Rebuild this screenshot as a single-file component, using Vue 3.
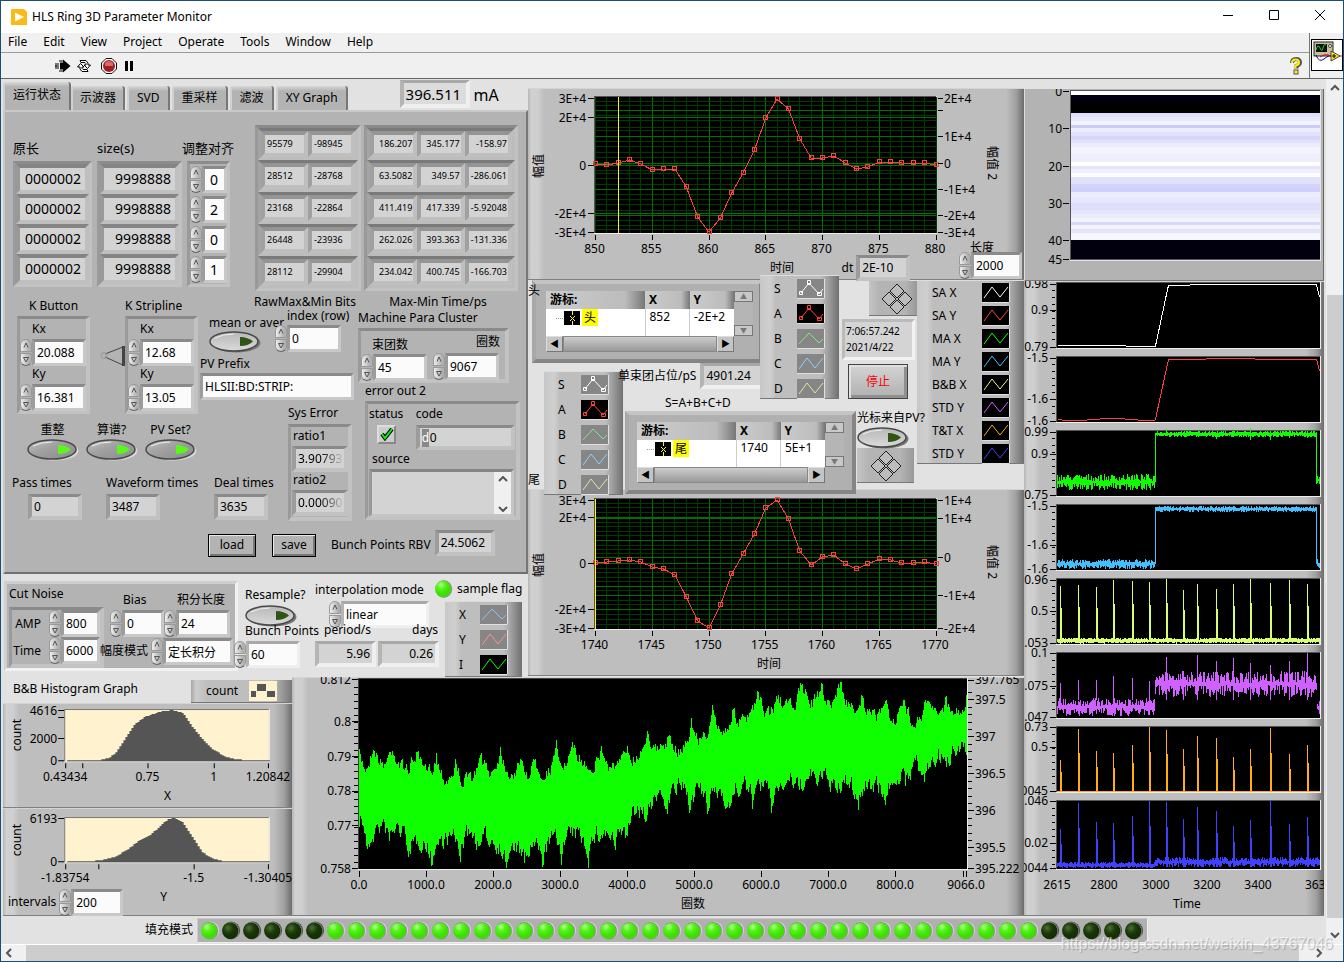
<script setup>
import { h } from 'vue'

const Spin = () =>
  h('span', { class: 'spin' }, [
    h('button', { class: 'up', type: 'button', 'aria-label': 'Increment' }, [
      h('svg', { viewBox: '0 0 10 11' }, [h('path', { d: 'M3 7.500 5 3 7 7.500', fill: 'none', stroke: '#555' })])
    ]),
    h('button', { class: 'down', type: 'button', 'aria-label': 'Decrement' }, [
      h('svg', { viewBox: '0 0 10 11' }, [h('path', { d: 'M2.5 3.500H7.500L5 8Z', fill: 'none', stroke: '#555' })])
    ])
  ])
const Num = (p) =>
  h('div', { class: 'num' }, [h(Spin), h('input', { type: 'text', value: p.value, 'aria-label': p.label })])
Num.props = ['value', 'label']

const Toggle = (p) =>
  h('button', { class: 'toggle', type: 'button', 'aria-label': p.label, 'aria-pressed': String(p.on) }, [
    h('svg', { viewBox: '0 0 52 22', width: 52, height: 22 }, [
      h('ellipse', { cx: 27.5, cy: 12, rx: 24, ry: 9.5, fill: p.on ? '#d8d8d8' : '#777' }),
      h('ellipse', { cx: 25, cy: 10.5, rx: 24, ry: 9.5, fill: p.on ? 'url(#ovalOn)' : 'url(#ovalOff)', stroke: '#4a4a4a', 'stroke-width': 1.5 }),
      h('path', { d: 'M6 7Q14 3 25 3', fill: 'none', stroke: '#eee' }),
      h('path', { d: 'M31 6Q39 6 44 10.500Q39 15 31 15Z', fill: p.on ? '#5cf51c' : '#2f5414' })
    ])
  ])
Toggle.props = { on: Boolean, label: String }

const Wave = (p) =>
  h('svg', { class: 'wave', viewBox: '0 0 28 20', width: 28, height: 20 }, [
    h('rect', { width: 28, height: 20, fill: p.dark ? '#000' : '#868686' }),
    h('path', { d: 'M0 19.500H27.500V0', fill: 'none', stroke: '#e0e0e0' }),
    h('path', {
      d: p.kind === 'a' ? 'M2 15 12 4 22 14 26 10' : p.kind === 'm' ? 'M4 14 12 4 22 15 26 10' : 'M2 15 10 4 18 14 26 4',
      fill: 'none', stroke: p.color
    }),
    p.kind === 'm' ? h('path', { d: 'M2.5 12.500h3v3h-3ZM10.500 1.500h3v4h-3ZM20.500 13.500h4v3h-4Z', fill: 'none', stroke: p.color }) : null
  ])
Wave.props = { color: String, kind: String, dark: Boolean }

const Pad = () =>
  h('svg', { class: 'pad', viewBox: '0 0 32 32', width: 32, height: 32 }, [
    h('path', {
      d: 'M16 1 23 8 16 15 9 8ZM16 17 23 24 16 31 9 24ZM8 9 15 16 8 23 1 16ZM24 9 31 16 24 23 17 16Z',
      fill: '#bcbcbc', stroke: '#222'
    })
  ])

const menus = ['File', 'Edit', 'View', 'Project', 'Operate', 'Tools', 'Window', 'Help']
const tabs = ['运行状态', '示波器', 'SVD', '重采样', '滤波', 'XY Graph']
const adjust = [0, 2, 0, 1]
const rawBits = [['95579', '-98945'], ['28512', '-28768'], ['23168', '-22864'], ['26448', '-23936'], ['28112', '-29904']]
const times = [
  ['186.207', '345.177', '-158.97'],
  ['63.5082', '349.57', '-286.061'],
  ['411.419', '417.339', '-5.92048'],
  ['262.026', '393.363', '-131.336'],
  ['234.042', '400.745', '-166.703']
]
const plots = [
  { n: 'S', c: '#fff', k: 'm' },
  { n: 'A', c: '#ff4040', k: 'm', d: true },
  { n: 'B', c: '#80e880', k: 'a' },
  { n: 'C', c: '#90d0ff', k: 'z' },
  { n: 'D', c: '#e0e8a0', k: 'z' }
]
const strips = [
  { n: 'SA X', c: '#ffffff' },
  { n: 'SA Y', c: '#ff4040' },
  { n: 'MA X', c: '#10ff00' },
  { n: 'MA Y', c: '#40c0ff' },
  { n: 'B&B X', c: '#d8ff70' },
  { n: 'STD Y', c: '#d060ff' },
  { n: 'T&T X', c: '#ffb010' },
  { n: 'STD Y', c: '#4040ff' }
]
const cursors = [
  { id: 'head', name: '头', x: '852', y: '-2E+2' },
  { id: 'tail', name: '尾', x: '1740', y: '5E+1' }
]
const leds = Array.from({ length: 45 }, (_, i) => i === 0 || (i > 5 && i < 40))

let seed = 7
const rnd = () => {
  seed = (seed * 16807) % 2147483647
  return seed / 2147483647
}
const r1 = (v) => Math.round(v * 10) / 10
const path = (pts) => 'M' + pts.map((p) => r1(p[0]) + ' ' + r1(p[1])).join('L')

const xs = Array.from({ length: 31 }, (_, i) => 595.5 + i * 11.35)
const headY = [164, 165, 163, 160, 164, 170, 169, 169, 187, 217, 232, 218, 193, 173, 150, 118, 99, 109, 139, 158, 158, 156, 163, 169, 167, 162, 162, 163, 163, 163, 165]
const tailY = [563, 562, 561, 560, 562, 567, 569, 575, 597, 621, 628, 605, 574, 554, 534, 508, 500, 519, 551, 565, 557, 555, 564, 569, 564, 559, 560, 563, 563, 562, 564]
const graphs = [
  {
    id: 'h', box: '528 88 496 191', top: 97, bottom: 233, ys: headY, x0: 850, tick: 5, xt: 253, unit: 272,
    left: [['3E+4', 98.5], ['2E+4', 117.5], ['0', 165.5], ['-2E+4', 213.5], ['-3E+4', 232.5]],
    right: [['2E+4', 98.5], ['', 110.5], ['1E+4', 136.5], ['0', 163.5], ['-1E+4', 189.5], ['-2E+4', 215.5], ['-3E+4', 232.5]],
    major: [110, 117, 136, 163, 165, 189, 213, 215],
    minor: [101, 105, 115, 120, 127, 130, 141, 146, 152, 157, 170, 173, 178, 184, 194, 199, 204, 210, 220, 225, 229], cursor: 618
  },
  {
    id: 't', box: '528 489 496 187', top: 499, bottom: 629, ys: tailY, x0: 1740, tick: 5, xt: 649, unit: 668,
    left: [['3E+4', 500.5], ['2E+4', 517.5], ['0', 563.5], ['-2E+4', 609.5], ['-3E+4', 628.5]],
    right: [['1E+4', 500.5], ['1E+4', 518.5], ['0', 557.5], ['-1E+4', 595.5], ['-2E+4', 628.5]],
    major: [517, 518, 540, 557, 563, 586, 595, 609],
    minor: [503, 507, 512, 522, 526, 531, 535, 545, 549, 553, 568, 572, 577, 581, 590, 600, 604, 614, 619, 624], cursor: 595
  }
]

const interp = (t, x) => {
  for (let i = 1; i < t.length; i++) {
    if (x <= t[i][0]) {
      const a = t[i - 1]
      const b = t[i]
      return a[1] + ((b[1] - a[1]) * (x - a[0])) / (b[0] - a[0])
    }
  }
  return t[t.length - 1][1]
}
const hist1 = [[65, 760.5], [97, 760], [107, 758], [115, 752], [125, 737], [133, 725], [143, 717], [160, 711.5], [171, 710], [182, 713], [192, 728], [200, 738], [210, 748], [223, 756], [233, 759], [247, 760], [268, 760.5]]
const hist2 = [[65, 861.5], [87, 861], [100, 860], [113, 857], [127, 849], [140, 839], [150, 834], [160, 825], [167, 819], [173, 818], [182, 823], [193, 840], [200, 851], [210, 858], [223, 861], [268, 861.5]]
const steps = (t, base) => {
  let d = 'M65 ' + base
  for (let x = 65; x < 268; x += 2) d += 'V' + Math.round(interp(t, x)) + 'H' + (x + 2)
  return d + 'V' + base + 'Z'
}
const histPaths = [steps(hist1, 761), steps(hist2, 862)]

const uPeaks = [[359, 755], [373, 743], [392, 744], [416, 750], [436, 754], [455, 763], [481, 755], [500, 748], [521, 757], [535, 756], [556, 748], [574, 742], [601, 747], [627, 745], [647, 727], [667, 735], [691, 723], [712, 713], [733, 708], [757, 693], [778, 692], [802, 680], [821, 685], [840, 679], [861, 695], [884, 698], [903, 700], [927, 696], [946, 695], [967, 691]]
const lDips = [[359, 820], [367, 855], [389, 842], [410, 857], [431, 863], [460, 855], [479, 852], [506, 868], [524, 867], [542, 864], [561, 854], [588, 856], [615, 852], [625, 840], [646, 823], [667, 808], [689, 807], [707, 812], [729, 810], [752, 803], [771, 807], [799, 797], [837, 800], [858, 805], [885, 803], [905, 788], [924, 783], [946, 772], [967, 757]]
const dist = (t, x) => Math.min(1, Math.min(...t.map((p) => Math.abs(p[0] - x))) / 8)
const turns = (() => {
  const top = []
  const bot = []
  let du = 0
  let dl = 0
  for (let x = 359; x < 967; x++) {
    du = du * 0.5 + (rnd() - 0.5) * 12
    dl = dl * 0.5 + (rnd() - 0.5) * 16
    const u = interp(uPeaks, x) + 20 * Math.pow(dist(uPeaks, x), 0.6) + du
    const l = interp(lDips, x) - 20 * Math.pow(dist(lDips, x), 0.5) + dl
    top.push('V' + Math.max(679, Math.round(u)) + 'H' + (x + 1))
    bot.unshift('V' + Math.min(868, Math.round(l)) + 'H' + x)
  }
  return 'M359 800' + top.join('') + bot.join('') + 'Z'
})()

const spikes = [1060, 1078, 1096, 1113, 1132, 1149, 1166, 1183, 1197, 1216, 1233, 1250, 1270, 1289, 1307]
const trace = (fn) => {
  const pts = []
  for (let x = 1057; x < 1320; x++) pts.push([x + 0.5, fn(x)])
  return path(pts)
}
const noise = (fn) => {
  let d = ''
  for (let x = 1057; x < 1320; x++) {
    const [c, a] = fn(x)
    d += 'M' + (x + 0.5) + ' ' + r1(c - 1 - rnd() * a) + 'V' + r1(c + 1 + rnd() * a)
  }
  return d
}
const comb = (tops, base) => spikes.map((x, i) => `M${x + 0.5} ${base}V${tops[i]}M${x + 1.5} ${base}V${Math.round((base + tops[i] * 1.6) / 2.6)}`).join('')
const up = (x) => x >= 1155 && x < 1317
const tops5 = [586, 585, 587, 580, 581, 582, 579, 590, 584, 589, 584, 579, 583, 580, 584]
const tops6 = [683, 680, 680, 676, 678, 681, 657, 671, 655, 661, 658, 663, 665, 661, 653]
const tops7 = [760, 729, 751, 753, 745, 727, 730, 749, 736, 738, 757, 749, 728, 754, 745]
const tops8 = [829, 803, 822, 823, 816, 801, 802, 819, 807, 811, 826, 820, 801, 824, 817]
const bands = [
  { y: 283, h: 65, d: trace((x) => (x < 1155 ? 345 + (x > 1125 ? 1.5 : 0) : x < 1168 ? 346 - (x - 1155) * 4.7 : x < 1317 ? (x < 1190 ? 285.5 : 284.5) : 285 + (x - 1316) * 4)), t: [['0.98', 284], ['0.9', 310], ['0.79', 347]] },
  { y: 357, h: 65, d: trace((x) => (x < 1155 ? 419.5 + Math.round(Math.sin(x / 12)) : x < 1168 ? 419 - (x - 1155) * 4.6 : x < 1317 ? 359.5 - (x > 1205 && x < 1255 ? 1 : 0) : 359 + (x - 1316) * 4)), t: [['-1.5', 358], ['-1.6', 399], ['-1.6', 421]] },
  { y: 431, h: 65, d: noise((x) => (up(x) ? [434, spikes.includes(x) ? 6 : 2] : x < 1155 ? [482, 7] : [480, 3])) + 'M1155.5 433V482M1316.5 433V484', t: [['0.99', 432], ['0.9', 454], ['0.75', 495]] },
  { y: 505, h: 65, d: noise((x) => (up(x) ? [509, 2] : [564, 4])) + 'M1155.5 508V564M1316.5 508V564', t: [['-1.5', 506], ['-1.6', 545], ['-1.6', 569]] },
  { y: 579, h: 65, d: noise(() => [640.5, 2]) + comb(tops5, 642), t: [['0.96', 580], ['0.5', 611], ['.053', 643]] },
  { y: 653, h: 65, d: noise((x) => (up(x) ? [684, 12] : [707, 8])) + spikes.map((x, i) => `M${x + 0.5} 700V${tops6[i]}`).join(''), t: [['0.1', 653], ['.075', 686], ['.047', 717]] },
  { y: 727, h: 65, d: 'M1057 791.5H1320' + comb(tops7, 792), t: [['0.73', 727], ['0.5', 747], ['0045', 791]] },
  { y: 801, h: 68, d: noise((x) => (x < 1155 ? [865, 2] : [862, 4])) + comb(tops8, 867), t: [['.046', 801], ['0.02', 843], ['0044', 868]] }
]
const shades = [
  [91, 4, '#fff'], [95, 7, '#00000f'], [102, 11, '#000'], [113, 4, '#dfdffd'], [117, 4, '#e8e7fe'], [121, 4, '#f3f3fe'], [125, 3, '#cbcbfa'], [128, 4, '#ededfd'], [132, 4, '#e2e2fd'],
  [136, 4, '#d7d7fb'], [140, 3, '#e1e1fb'], [143, 4, '#ebebfd'], [147, 7, '#f3f3fe'], [154, 8, '#eeeefd'], [162, 4, '#fff'], [166, 3, '#e4e4fc'], [169, 4, '#f0f0fe'], [173, 4, '#fcfcff'],
  [177, 7, '#e1e1fb'], [184, 4, '#d4d4fb'], [188, 4, '#cfcffb'], [192, 5, '#ececfc'], [197, 6, '#e8e8fc'], [203, 7, '#dfdffb'], [210, 4, '#e4e4fb'], [214, 4, '#ebebfc'], [218, 4, '#f3f3fe'],
  [222, 3, '#d8d8fb'], [225, 4, '#f2f2fe'], [229, 4, '#e3e3fc'], [233, 7, '#f6f6ff'], [240, 19, '#00000f']
]
const range = (a, b, s) => {
  const o = []
  for (let v = a; v <= b; v += s) o.push(r1(v))
  return o
}
</script>

<template>
  <div class="window">
    <svg class="defs" width="0" height="0" aria-hidden="true">
      <defs>
        <linearGradient id="ovalOn" x1="0" y1="0" x2="1" y2="1">
          <stop offset="0" stop-color="#c4c4c4" /><stop offset=".4" stop-color="#a2a2a2" /><stop offset="1" stop-color="#8a8a8a" />
        </linearGradient>
        <linearGradient id="ovalOff" x1="0" y1="0" x2="0" y2="1">
          <stop offset="0" stop-color="#b8b8b8" /><stop offset="1" stop-color="#dadada" />
        </linearGradient>
      </defs>
    </svg>
    <header class="title">
      <svg width="16" height="16" viewBox="0 0 16 16"><path d="M1 0H13L16 3V16H0V1Z" fill="#fdb913" /><path d="M4 3.500 13 8 4 12.500Z" fill="#fff" /></svg>
      <span>HLS Ring 3D Parameter Monitor</span>
      <div class="caption">
        <button aria-label="Minimize"><svg width="12" height="12"><path d="M1 6.500H11" stroke="#000" /></svg></button>
        <button aria-label="Maximize"><svg width="12" height="12"><path d="M1.500 1.500H10.500V10.500H1.500Z" fill="none" stroke="#000" /></svg></button>
        <button aria-label="Close"><svg width="12" height="12"><path d="M1 1 11 11M11 1 1 11" stroke="#000" /></svg></button>
      </div>
    </header>
    <div class="bars">
      <div class="barcol">
        <nav class="menu"><button v-for="m in menus" :key="m">{{ m }}</button></nav>
        <div class="tools">
          <button aria-label="Run"><svg width="16" height="14" viewBox="0 0 16 14"><path d="M1 4V10M3 4V10M0 7H2" stroke="#000" stroke-width="1" /><path d="M5 3.500H8V0.500L15.500 7 8 13.500V10.500H5Z" fill="#000" /><path d="M5 1V3M7 1V3M5 11V13M7 11V13" stroke="#000" /></svg></button>
          <button aria-label="Run continuously"><svg width="16" height="14" viewBox="0 0 16 14" fill="#fff" stroke="#000"><path d="M4 1.500H10L12 4V6H14.500L11.500 9.500 8 6H10V4.500L9 3.500H5Z" /><path d="M12 12.500H6L4 10V8H1.500L4.500 4.500 8 8H6V9.500L7 10.500H11Z" /></svg></button>
          <button aria-label="Abort"><svg width="16" height="16" viewBox="0 0 16 16"><path d="M5 .5H11L15.500 5V11L11 15.500H5L.5 11V5Z" fill="#fff" stroke="#111" /><circle cx="8" cy="8" r="6" fill="#a11f22" /><path d="M4 5Q8 1 12 5V8H4Z" fill="#d86a6a" /></svg></button>
          <button aria-label="Pause"><svg width="10" height="12"><path d="M1 1H4V11H1ZM6 1H9V11H6Z" fill="#000" /></svg></button>
          <button class="help" aria-label="Context help"><svg width="14" height="18" viewBox="0 0 14 18"><path d="M3 6Q3 2 7 2 11 2 11 5.500 11 8 7.500 9V11.500" fill="none" stroke="#555" stroke-width="4" /><path d="M3 6Q3 2.500 6.500 2.500 10 2.500 10 5.500 10 8 6.500 8.500V11" fill="none" stroke="#ffee10" stroke-width="2" /><rect x="5" y="13" width="4" height="4" fill="#ffee10" stroke="#555" /></svg></button>
        </div>
      </div>
      <div class="viicon">
        <svg width="32" height="32" viewBox="0 0 32 32"><rect x=".5" y=".5" width="31" height="31" fill="#fff" stroke="#000" /><rect x="3" y="3" width="19" height="14" fill="#c8bf98" stroke="#222" /><rect x="5" y="5" width="11" height="8" fill="#111" /><path d="M5 11Q7 4 9 9T12 9 15 6" fill="none" stroke="#20d040" /><circle cx="19" cy="7" r="1.500" fill="#fff" stroke="#444" /><path d="M5 16Q8 24 13 20T20 17" fill="none" stroke="#00a" /><path d="M9 18Q14 14 20 17M26 17H31" fill="none" stroke="#d00" /><path d="M20 12 29 17 20 22Z" fill="#ffe720" stroke="#444" /><path d="M21 17H25M23 15V19" stroke="#000" /></svg>
      </div>
    </div>

    <div class="body">
      <main class="front">
        <div class="board">
          <section class="tabarea">
            <div class="tabs">
              <button v-for="(t, i) in tabs" :key="t" :class="{ on: i === 0 }">{{ t }}</button>
              <output class="ind current">396.511</output><span class="ma">mA</span>
            </div>
            <div class="tabpage">
              <div class="arrays">
                <div class="arrcol len"><span>原长</span><div class="arr"><output v-for="i in 4" :key="i">0000002</output></div></div>
                <div class="arrcol size"><span>size(s)</span><div class="arr"><output v-for="i in 4" :key="i">9998888</output></div></div>
                <div class="arrcol adj"><span>调整对齐</span><div class="arr"><Num v-for="(v, i) in adjust" :key="i" :value="v" :label="'调整对齐 ' + (i + 1)" /></div></div>
                <div class="gridcol raw"><div class="cells"><div v-for="(r, i) in rawBits" :key="i" class="cellrow"><output v-for="v in r" :key="v">{{ v }}</output></div></div><span>RawMax&amp;Min Bits</span></div>
                <div class="gridcol tim"><div class="cells"><div v-for="(r, i) in times" :key="i" class="cellrow"><output v-for="v in r" :key="v">{{ v }}</output></div></div><span>Max-Min Time/ps</span></div>
              </div>
              <div class="lower">
                <div class="kset">
                  <div class="krow">
                    <div class="kfield mid"><span>K Button</span><div class="cluster"><span>Kx</span><Num value="20.088" label="Button Kx" /><span>Ky</span><Num value="16.381" label="Button Ky" /></div></div>
                    <svg width="26" height="22" viewBox="0 0 26 22" fill="none" stroke="#444"><path d="M5 9 23 2V20L5 12" /><circle cx="4" cy="10.500" r="3" stroke="#999" /><path d="M23.500 1V21" stroke-width="3" /></svg>
                    <div class="kfield"><span>K Stripline</span><div class="cluster"><span>Kx</span><Num value="12.68" label="Stripline Kx" /><span>Ky</span><Num value="13.05" label="Stripline Ky" /></div></div>
                  </div>
                  <div class="toggles">
                    <div><span>重整</span><Toggle on label="重整" /></div>
                    <div><span>算谱?</span><Toggle on label="算谱" /></div>
                    <div><span>PV Set?</span><Toggle on label="PV Set" /></div>
                  </div>
                </div>
                <div class="mean">
                  <div class="meanrow">
                    <div class="m1"><span>mean or aver</span><Toggle label="mean or aver" /></div>
                    <div class="m2"><span>index (row)</span><Num value="0" label="index (row)" /></div>
                  </div>
                  <label for="prefix">PV Prefix</label>
                  <input id="prefix" class="ctl" value="HLSII:BD:STRIP:" />
                </div>
                <div class="syserr">
                  <span>Sys Error</span>
                  <div class="cluster"><span>ratio1</span><output class="ind fade"><i>3.90793</i></output><span>ratio2</span><output class="ind fade"><i>0.00090</i></output></div>
                </div>
                <div class="times">
                  <div><span>Pass times</span><output class="ind">0</output></div>
                  <div><span>Waveform times</span><output class="ind">3487</output></div>
                  <div><span>Deal times</span><output class="ind">3635</output></div>
                </div>
                <div class="machine">
                  <span>Machine Para Cluster</span>
                  <div class="cluster para">
                    <div><span>束团数</span><Num value="45" label="束团数" /></div>
                    <div class="turn"><span>圈数</span><Num value="9067" label="圈数" /></div>
                  </div>
                  <span class="errcap">error out 2</span>
                  <div class="cluster err">
                    <div class="errtop">
                      <div><span>status</span><button class="check" aria-label="status"><svg width="14" height="14" viewBox="0 0 14 14"><path d="M2 7 5 11 12 2" fill="none" stroke="#000" stroke-width="4" /><path d="M2 7 5 11 12 2" fill="none" stroke="#10f010" stroke-width="2" /></svg></button></div>
                      <div class="code"><span>code</span><output class="ind"><i>d</i>0</output></div>
                    </div>
                    <label for="source">source</label>
                    <div class="source"><textarea id="source"></textarea><div class="minibar"><svg width="10" height="6"><path d="M1 5 5 1 9 5" fill="none" stroke="#555" stroke-width="2" /></svg><svg width="10" height="6"><path d="M1 1 5 5 9 1" fill="none" stroke="#555" stroke-width="2" /></svg></div></div>
                  </div>
                </div>
                <div class="actions">
                  <button>load</button><button class="save">save</button><span>Bunch Points RBV</span><output class="ind">24.5062</output>
                </div>
              </div>
            </div>
          </section>

          <section class="settings">
            <div class="cut">
              <div class="cutl"><span>Cut Noise</span><div class="cluster"><div class="line"><span>AMP</span><Num value="800" label="AMP" /></div><div class="line"><span>Time</span><Num value="6000" label="Time" /></div></div></div>
              <div class="cutr">
                <div class="r1"><div class="bias"><span>Bias</span><Num value="0" label="Bias" /></div><div class="integ"><span>积分长度</span><Num value="24" label="积分长度" /></div></div>
                <div class="r2"><span>幅度模式</span><Num value="定长积分" label="幅度模式" /></div>
              </div>
            </div>
            <div class="resample"><span>Resample?</span><Toggle label="Resample" /><span>Bunch Points</span><Num value="60" label="Bunch Points" /></div>
            <div class="interp">
              <span>interpolation mode</span><Num value="linear" label="interpolation mode" />
              <div class="pd"><div><span>period/s</span><output class="ind">5.96</output></div><div class="days"><span>days</span><output class="ind">0.26</output></div></div>
            </div>
            <div class="flag">
              <div class="flagrow"><i class="lamp on"></i><span>sample flag</span></div>
              <div class="legend xyi">
                <div><span>X</span><Wave color="#90c0ff" kind="a" /></div><div><span>Y</span><Wave color="#ff9090" kind="z" /></div><div><span>I</span><Wave color="#10ff00" kind="z" dark /></div>
              </div>
            </div>
          </section>

          <section class="hist">
            <div class="histhead"><span>B&amp;B Histogram Graph</span><div class="histleg"><span>count</span><svg width="28" height="20"><rect width="28" height="20" fill="#fff3cf" /><path d="M2 10H7V16H2ZM8 3H17V10H8ZM18 10H26V16H18Z" fill="#555" /></svg></div></div>
            <div class="panel">
              <svg class="chart" viewBox="3 703 288 105">
                <rect x="64" y="709" width="205" height="53" fill="#eee" /><rect x="64" y="709" width="204" height="52" fill="#777" /><rect x="65" y="710" width="203" height="51" fill="#fff3cf" />
                <path :d="histPaths[0]" fill="#555" />
                <path d="M58 710.500h6M58 717.500h6M58 738.500h6M58 760.500h6M65.500 763v5M82.500 763v5M147.500 763v5M213.500 763v5M267.500 763v5" stroke="#000" />
                <g text-anchor="end"><text x="57" y="715">4616</text><text x="57" y="743">2000</text><text x="57" y="765">0</text></g>
                <g text-anchor="middle"><text x="65" y="781">0.43434</text><text x="147" y="781">0.75</text><text x="213" y="781">1</text><text x="267" y="781">1.20842</text><text x="167" y="800">X</text><text transform="translate(21 735) rotate(-90)">count</text></g>
              </svg>
            </div>
            <div class="panel">
              <svg class="chart" viewBox="3 808 288 107">
                <rect x="64" y="817" width="205" height="46" fill="#eee" /><rect x="64" y="817" width="204" height="45" fill="#777" /><rect x="65" y="818" width="203" height="44" fill="#fff3cf" />
                <path :d="histPaths[1]" fill="#555" />
                <path d="M58 818.500h6M58 861.500h6M65.500 864v5M98.500 864v5M193.500 864v5M267.500 864v5" stroke="#000" />
                <g text-anchor="end"><text x="57" y="823">6193</text><text x="57" y="866">0</text></g>
                <g text-anchor="middle"><text x="65" y="882">-1.83754</text><text x="193" y="882">-1.5</text><text x="267" y="882">-1.30405</text><text x="163" y="901">Y</text><text transform="translate(21 840) rotate(-90)">count</text></g>
              </svg>
              <div class="intervals"><span>intervals</span><Num value="200" label="intervals" /></div>
            </div>
          </section>

          <section class="center">
            <template v-for="(g, gi) in graphs" :key="g.id">
              <div class="panel scope">
                <svg class="chart" :viewBox="g.box">
                  <rect x="594" :y="g.top - 1" width="343" :height="g.bottom - g.top + 2" fill="#eee" /><rect x="594" :y="g.top - 1" width="342" :height="g.bottom - g.top + 1" fill="#555" /><rect x="595" :y="g.top" width="341" :height="g.bottom - g.top" fill="#000" />
                  <g shape-rendering="crispEdges" fill="none">
                    <path :d="g.minor.map((y) => `M595 ${y + 0.5}H936`).join('') + xs.map((x) => `M${Math.floor(x) + 0.5} ${g.top}V${g.bottom}`).join('')" stroke="#003c00" />
                    <path :d="g.major.map((y) => `M595 ${y + 0.5}H936`).join('') + [1, 2, 3, 4, 5].map((i) => `M${Math.floor(xs[i * 5]) + 0.5} ${g.top}V${g.bottom}`).join('')" stroke="#007000" />
                    <path :d="path(xs.map((x, i) => [x, g.ys[i]]))" stroke="#ff4040" />
                    <path :d="xs.map((x, i) => `M${Math.floor(x) - 1.5} ${g.ys[i] - 2.5}h4v4h-4z`).join('')" stroke="#ff4040" />
                    <path :d="`M${g.cursor + 0.5} ${g.top}V${g.bottom}`" stroke="#ffee20" />
                    <path :d="g.left.map((t) => `M588 ${t[1]}h6`).join('') + g.right.map((t) => `M938 ${t[1]}h5`).join('') + [0, 1, 2, 3, 4, 5, 6].map((i) => `M${Math.floor(xs[i * 5]) + 0.5} ${g.bottom + 2}v5`).join('')" stroke="#000" />
                  </g>
                  <g text-anchor="end"><text v-for="(t, i) in g.left" :key="i" x="586" :y="t[1] + 4">{{ t[0] }}</text></g>
                  <text v-for="(t, i) in g.right" :key="i" x="944" :y="t[1] + 4">{{ t[0] }}</text>
                  <g text-anchor="middle">
                    <text v-for="i in 7" :key="i" :x="xs[(i - 1) * 5] - 1" :y="g.xt">{{ g.x0 + (i - 1) * g.tick }}</text>
                    <text :x="gi ? 769 : 782" :y="g.unit">时间</text>
                    <text :transform="`translate(543 ${gi ? 565 : 166}) rotate(-90)`">幅值</text>
                    <text :transform="`translate(988 ${gi ? 562 : 163}) rotate(90)`">幅值 2</text>
                  </g>
                </svg>
                <div v-if="gi === 0" class="extras"><label for="dt">dt</label><output id="dt" class="ind">2E-10</output><div class="reclen"><span>长度</span><Num value="2000" label="长度" /></div></div>
              </div>
              <div v-if="gi === 0" class="middle">
                <div class="marks"><span>头</span><span>尾</span></div>
                <div class="zone">
                  <div v-for="c in cursors.slice(0, 1)" :key="c.id" class="cursor">
                    <div class="ctop">
                      <table><thead><tr><th>游标:</th><th>X</th><th>Y</th></tr></thead><tbody><tr><td class="cn"><i class="dots"></i><svg width="16" height="14"><rect width="16" height="14" fill="#000" /><path d="M8.500 0V4M8.500 10V14M6 5 11 10M11 5 6 10" stroke="#ff0" /></svg><b>{{ c.name }}</b></td><td>{{ c.x }}</td><td>{{ c.y }}</td></tr></tbody></table>
                      <div class="vbar"><button aria-label="Up">▲</button><button aria-label="Down">▼</button></div>
                    </div>
                    <div class="hbar"><button aria-label="Left">◀</button><i></i><button aria-label="Right">▶</button></div>
                  </div>
                  <div class="zrow">
                    <div class="legend abcd"><div v-for="p in plots" :key="p.n"><span>{{ p.n }}</span><Wave :color="p.c" :kind="p.k" :dark="p.d" /></div></div>
                    <div class="zcol">
                      <div class="slot"><span>单束团占位/pS</span><output class="ind">4901.24</output></div>
                      <div class="formula">S=A+B+C+D</div>
                      <div v-for="c in cursors.slice(1)" :key="c.id" class="cursor">
                        <div class="ctop">
                          <table><thead><tr><th>游标:</th><th>X</th><th>Y</th></tr></thead><tbody><tr><td class="cn"><i class="dots"></i><svg width="16" height="14"><rect width="16" height="14" fill="#000" /><path d="M8.500 0V4M8.500 10V14M6 5 11 10M11 5 6 10" stroke="#ff0" /></svg><b>{{ c.name }}</b></td><td>{{ c.x }}</td><td>{{ c.y }}</td></tr></tbody></table>
                          <div class="vbar"><button aria-label="Up">▲</button><button aria-label="Down">▼</button></div>
                        </div>
                        <div class="hbar"><button aria-label="Left">◀</button><i></i><button aria-label="Right">▶</button></div>
                      </div>
                    </div>
                  </div>
                </div>
                <div class="legend abcd over"><div v-for="p in plots" :key="p.n"><span>{{ p.n }}</span><Wave :color="p.c" :kind="p.k" :dark="p.d" /></div></div>
                <div class="clock">
                  <div class="padbox p1"><Pad /></div>
                  <output class="stamp">7:06:57.242<br />2021/4/22</output>
                  <button class="stop">停止</button>
                  <span class="pvq">光标来自PV?</span>
                  <Toggle label="光标来自PV" />
                  <div class="padbox p2"><Pad /></div>
                </div>
                <div class="legend eight"><div v-for="(s, i) in strips" :key="i"><span>{{ s.n }}</span><Wave :color="s.c" kind="z" dark /></div></div>
              </div>
            </template>
          </section>

          <section class="panel turnsec">
            <svg class="chart" viewBox="292 677 732 239">
              <rect x="358" y="678" width="610" height="192" fill="#eee" /><rect x="358" y="678" width="609" height="191" fill="#444" /><rect x="359" y="679" width="608" height="190" fill="#000" />
              <path :d="turns" fill="#10ff00" shape-rendering="crispEdges" />
              <g stroke="#000" shape-rendering="crispEdges">
                <path :d="range(687, 862, 7).map((y) => `M354 ${Math.round(y) + 0.5}h4`).join('') + 'M352 679.500h6M352 721.500h6M352 756.500h6M352 791.500h6M352 825.500h6M352 868.500h6'" />
                <path :d="range(692, 862, 7.4).map((y) => `M968 ${Math.round(y) + 0.5}h4`).join('') + 'M968 680.500h6M968 699.500h6M968 736.500h6M968 773.500h6M968 810.500h6M968 847.500h6M968 868.500h6'" />
                <path :d="range(359, 900, 67).map((x) => `M${Math.round(x) + 0.5} 871v6`).join('') + 'M963.500 871v6M966.500 871v6'" />
              </g>
              <g text-anchor="end"><text v-for="t in [['0.812', 684], ['0.8', 726], ['0.79', 761], ['0.78', 795], ['0.77', 830], ['0.758', 873]]" :key="t[0]" x="351" :y="t[1]">{{ t[0] }}</text></g>
              <text v-for="t in [['397.765', 684], ['397.5', 704], ['397', 741], ['396.5', 778], ['396', 815], ['395.5', 852], ['395.222', 873]]" :key="t[0]" x="975" :y="t[1]">{{ t[0] }}</text>
              <g text-anchor="middle"><text v-for="i in 9" :key="i" :x="359 + (i - 1) * 67" y="889">{{ (i - 1) * 1000 }}.0</text><text x="966" y="889">9066.0</text><text x="693" y="908">圈数</text></g>
            </svg>
          </section>

          <section class="right">
            <div class="flat">
              <svg class="chart" viewBox="1025 89 298 190">
                <rect x="1070" y="90" width="251" height="171" fill="#e4e4e4" /><rect x="1070" y="90" width="250" height="170" fill="#555" />
                <rect v-for="s in shades" :key="s[0]" x="1071" :y="s[0]" width="249" :height="s[1]" :fill="s[2]" shape-rendering="crispEdges" />
                <path d="M1063 91.500h6M1063 128.500h6M1063 166.500h6M1063 203.500h6M1063 240.500h6M1063 259.500h6" stroke="#000" />
                <g text-anchor="end"><text v-for="t in [['0', 96], ['10', 133], ['20', 171], ['30', 208], ['40', 245], ['45', 264]]" :key="t[0]" x="1062" :y="t[1]">{{ t[0] }}</text></g>
              </svg>
            </div>
            <div class="panel tall">
              <svg class="chart" viewBox="1024 281 300 634">
                <g v-for="(b, i) in bands" :key="i">
                  <rect x="1056" :y="b.y - 1" width="265" :height="b.h + 2" fill="#eee" /><rect x="1056" :y="b.y - 1" width="264" :height="b.h + 1" fill="#555" /><rect x="1057" :y="b.y" width="263" :height="b.h" fill="#000" />
                  <path :d="b.d" fill="none" :stroke="strips[i].c" shape-rendering="crispEdges" />
                  <path :d="range(b.y + 7, b.y + b.h - 4, 7).map((y) => `M1052 ${Math.round(y) + 0.5}h3`).join('') + b.t.map((t) => `M1050 ${t[1] + 0.5}h6`).join('')" stroke="#000" />
                  <g text-anchor="end"><text v-for="(t, j) in b.t" :key="j" x="1048" :y="t[1] + 4">{{ t[0] }}</text></g>
                </g>
                <g text-anchor="middle"><text x="1057" y="889">2615</text><text x="1104" y="889">2800</text><text x="1156" y="889">3000</text><text x="1207" y="889">3200</text><text x="1258" y="889">3400</text><text x="1187" y="908">Time</text></g>
                <text x="1305" y="889">363</text>
              </svg>
            </div>
          </section>
        </div>
        <div class="fill"><span>填充模式</span><div class="ledbar"><i v-for="(l, i) in leds" :key="i" class="lamp" :class="{ on: l }"></i></div></div>
      </main>
      <div class="vscroll"><svg width="12" height="8"><path d="M2 6 6 2 10 6" fill="none" stroke="#555" stroke-width="2" /></svg><i></i><svg width="12" height="8"><path d="M2 2 6 6 10 2" fill="none" stroke="#555" stroke-width="2" /></svg></div>
    </div>
    <div class="hscroll"><svg width="8" height="12"><path d="M6 2 2 6 6 10" fill="none" stroke="#555" stroke-width="2" /></svg><i></i><svg width="8" height="12"><path d="M2 2 6 6 2 10" fill="none" stroke="#555" stroke-width="2" /></svg></div>
    <div class="mark">https://blog.csdn.net/weixin_43767046</div>
  </div>
</template>

<style scoped>
.window { position: relative; display: flex; flex-direction: column; border: 1px solid #1d4f72; border-bottom-width: 2px; background: #e2e2e2; font: 12px/16px "Noto Sans", "Noto Sans CJK SC", sans-serif; color: #000; white-space: nowrap; overflow: hidden; }
.defs { position: absolute; }
.title { display: flex; align-items: center; height: 32px; padding-left: 10px; gap: 5px; background: #fff; }
.caption { margin-left: auto; display: flex; }
.caption button { width: 46px; height: 30px; padding: 0; }
.bars { display: flex; height: 46px; background: #f0f0f0; border-bottom: 1px solid #666; }
.barcol { flex: 1; }
.menu { display: flex; gap: 16px; height: 20px; padding-left: 7px; border-bottom: 1px solid #9a9a9a; align-items: center; }
.menu button { padding: 0 0 2px; }
.tools { display: flex; align-items: center; height: 26px; padding-left: 54px; }
.tools svg { display: block; }
.tools button { padding: 0; margin-right: 5px; }
.tools button:nth-child(2) { margin-right: 9px; }
.tools button:nth-child(3) { margin-right: 7px; }
.tools .help { margin-left: auto; margin-right: 6px; }
.viicon { width: 34px; padding: 6px 0 0 1px; border-left: 1px solid #777; }
.body { display: flex; }
.front { flex: 1; min-width: 0; }
.board { display: grid; grid-template-columns: minmax(0, 291fr) minmax(0, 236fr) minmax(0, 496fr) minmax(0, 302fr); grid-template-rows: 495px 103px 239px; }
.tabarea { grid-column: 1 / 3; grid-row: 1; display: flex; flex-direction: column; }
.settings { grid-column: 1 / 3; grid-row: 2; }
.hist { grid-column: 1; grid-row: 3; }
.turnsec { grid-column: 2 / 4; grid-row: 3; }
.center { grid-column: 3; grid-row: 1 / 3; padding-top: 9px; }
.right { grid-column: 4; grid-row: 1 / 4; padding: 10px 2px 0 0; }
.tabs { display: flex; height: 31px; padding-left: 2px; align-items: flex-end; }
.tabs button { height: 24px; margin-right: 2px; padding: 0 7px; border-radius: 3px 3px 0 0; }
.tabs button:nth-child(n + 3) { padding: 0 8px; }
.tabs button.on { height: 28px; margin-right: 0; padding: 0 8px 3px; }
.current { margin-left: 50px; align-self: flex-start; margin-top: 1px; width: 70px; height: 28px; font-size: 15px; }
.current.ind { line-height: 22px; background: #dcdcdc; }
.ma { font-size: 16px; line-height: 32px; align-self: flex-start; margin-left: 4px; }
.tabpage { flex: 1; margin-left: 2px; border: 2px solid; border-color: #c8c8c8 #777 #707070 #c8c8c8; background: #b3b3b3; }
.arrays { display: flex; padding: 13px 0 0 8px; height: 197px; }
.arrcol { padding-top: 15px; }
.arrcol > span { display: block; line-height: 16px; margin-bottom: 5px; }
.len > span, .adj > span, .size > span { font-size: 13px; }
.arr { display: flex; flex-direction: column; border: 3px solid; border-color: #8c8c8c #c2c2c2 #c2c2c2 #9a9a9a; }
.arr output { height: 30px; line-height: 22px; font-size: 14px; text-align: right; padding-right: 4px; border: 4px solid; border-color: #848484 #bfbfbf #bfbfbf #999; background: #d3d3d3; }
.len { width: 79px; margin-right: 5px; }
.size { width: 85px; margin-right: 5px; }
.adj { width: 43px; margin-right: 25px; }
.adj > span { margin-left: -5px; }
.adj .num { height: 30px; }
.adj :deep(input) { font-size: 14px; height: 30px; padding: 0 5px; }
.gridcol { text-align: center; }
.raw { width: 106px; margin-right: 3px; }
.tim { width: 154px; }
.gridcol > span { display: block; margin-top: 3px; margin-left: -6px; }
.cells { border: 3px solid; border-color: #8a8a8a #c2c2c2 #c2c2c2 #999; }
.cellrow { display: flex; height: 32px; border: 3px solid; border-color: #7a7a7a #bdbdbd #bdbdbd #a4a4a4; }
.cellrow output { flex: 1 1 0; min-width: 0; height: 26px; font-size: 9px; line-height: 18px; border: 4px solid; border-color: #949494 #bfbfbf #bfbfbf #a0a0a0; background: #d3d3d3; text-align: right; padding-right: 1px; }
.raw .cellrow output { text-align: left; padding-left: 2px; }
.lower { display: grid; grid-template-columns: 195px 88px 69px 163px; grid-template-rows: 104px 66px 62px auto; margin-top: -11px; }
.kset { grid-column: 1; grid-row: 1 / 3; }
.krow { display: flex; align-items: center; padding-left: 12px; }
.krow > svg { margin: 0 -1px 0 10px; position: relative; z-index: 1; }
.kfield { width: 73px; flex: none; }
.kfield.mid > span { text-align: center; }
.kfield > span { display: block; height: 18px; }
.kfield .cluster { height: 98px; padding-top: 2px; }
.kfield .cluster > span { display: block; padding-left: 12px; height: 17px; }
.kfield .cluster > .num { height: 28px; }
.toggles { display: flex; padding: 8px 0 0 18px; }
.toggles > div { width: 59px; display: flex; flex-direction: column; align-items: center; gap: 1px; }
.mean { grid-column: 2 / 4; grid-row: 1; width: 154px; }
.meanrow { display: flex; height: 58px; padding-left: 9px; }
.m1 { width: 66px; padding-top: 17px; }
.m2 { width: 66px; padding-top: 10px; }
.m1 > span, .m2 > span { display: block; }
.m2 > span { padding-left: 12px; height: 17px; }
.mean label { display: block; height: 17px; }
.mean .ctl { height: 27px; }
.syserr { grid-column: 3; grid-row: 2 / 4; padding-top: 3px; }
.syserr > span { display: block; height: 19px; }
.syserr .cluster { width: 64px; height: 97px; padding: 1px; }
.syserr .cluster span { display: block; height: 18px; padding-left: 1px; }
.fade { width: 56px; height: 26px; overflow: hidden; }
.fade i { display: block; font-style: normal; mask-image: linear-gradient(90deg, #000 50%, rgba(0, 0, 0, 0.1)); }
.times { grid-column: 1 / 3; grid-row: 3; display: flex; padding: 7px 0 0 7px; }
.times > div { width: 94px; flex: none; }
.times > div:nth-child(2) { width: 108px; }
.times span { display: block; height: 19px; }
.times .ind { width: 54px; height: 26px; }
.times > div:first-child .ind { margin-left: 16px; }
.machine { grid-column: 4; grid-row: 1 / 4; padding-top: 12px; }
.machine > span { display: block; height: 18px; padding-left: 1px; }
.para { display: flex; width: 151px; height: 55px; margin-left: 1px; padding-top: 6px; }
.para > div { width: 66px; }
.para > div > span { display: block; height: 17px; padding-left: 11px; }
.para > .turn { margin: -3px 0 0 6px; }
.para > .turn > span { padding-left: 43px; height: 19px; }
.machine > .errcap { padding-left: 8px; }
.err { width: 155px; height: 119px; margin-left: 8px; padding: 2px 1px 0; }
.errtop { display: flex; height: 45px; }
.errtop > div { width: 47px; }
.errtop > .code { width: 100px; }
.errtop span, .err label { display: block; height: 19px; }
.err label { padding-left: 3px; height: 18px; }
.code .ind { height: 25px; }
.code i { display: inline-block; width: 7px; margin-right: 1px; background: #888; color: #fff; font-style: normal; line-height: 18px; }
.check { width: 19px; height: 19px; margin-left: 8px; padding: 0; }
.source { display: flex; width: 145px; height: 48px; border: 3px solid; border-color: #858585 #c4c4c4 #c4c4c4 #999; background: #d3d3d3; }
.source textarea { flex: 1; min-width: 0; border: 0; background: none; resize: none; }
.minibar { width: 17px; display: flex; flex-direction: column; justify-content: space-between; align-items: center; padding: 4px 0 2px; background: #f0f0f0; }
.actions { grid-column: 1 / 5; grid-row: 4; display: flex; align-items: center; padding-left: 203px; height: 30px; }
.actions button { width: 48px; height: 23px; padding: 0; box-shadow: inset 1px 1px 0 #e8e8e8, inset -2px -2px 0 #777; }
.actions .save { width: 44px; margin: 0 15px 0 16px; }
.actions .ind { width: 60px; height: 26px; margin: -4px 0 0 4px; }
.settings { display: flex; padding: 7px 0 0 3px; }
.cut { display: flex; width: 234px; height: 90px; flex: none; border: 3px solid; border-color: #cfcfcf #f2f2f2 #f2f2f2 #cfcfcf; background: #b3b3b3; }
.cutl { width: 97px; flex: none; padding: 2px 0 0 2px; }
.cutl > span { display: block; height: 21px; }
.cutl .cluster { height: 61px; }
.line { display: flex; align-items: center; justify-content: flex-end; height: 27px; gap: 8px; }
.line .num { width: 51px; }
.cutr { padding-top: 8px; }
.cutr .r1 { display: flex; padding-left: 6px; height: 46px; }
.bias { width: 54px; }
.bias > span, .integ > span { display: block; height: 18px; padding-left: 13px; }
.integ { width: 66px; }
.r2 { display: flex; align-items: center; margin-left: -4px; gap: 3px; }
.r2 .num { width: 82px; }
.r2 > span { height: 18px; }
.resample { width: 66px; flex: none; margin: 6px 0 0 -4px; }
.resample > span { display: block; padding-left: 11px; height: 18px; }
.resample .toggle { margin: 0 0 -4px 11px; }
.interp { width: 126px; flex: none; margin-left: 15px; }
.interp > span { display: block; height: 20px; padding-top: 1px; }
.interp > .num { width: 100px; margin-left: 14px; }
.pd { display: flex; margin-top: -6px; gap: 2px; position: relative; }
.pd > div { width: 61px; }
.pd span { display: block; padding-left: 9px; height: 19px; }
.pd .days span { text-align: right; padding-right: 1px; }
.pd .ind { text-align: right; height: 26px; }
.flag { margin-left: -7px; }
.flagrow { display: flex; height: 20px; gap: 2px; }
.flagrow .lamp { flex: none; margin-top: -2px; }
.xyi { margin-left: 11px; width: 77px; height: 76px; }
.xyi > div { height: 25px; padding: 0 14px; }
.hist { padding: 3px 0 0 2px; }
.histhead { display: flex; justify-content: space-between; height: 23px; padding-left: 10px; }
.histhead > span { padding-top: 1px; }
.histleg { display: flex; align-items: center; gap: 11px; width: 101px; padding-left: 15px; background: linear-gradient(90deg, #a8a8a8, #ccc 5px, #bebebe 16px, #bebebe 80%, #777); border-bottom: 1px solid #777; }
.intervals { position: absolute; left: 5px; bottom: 0; display: flex; align-items: center; gap: 3px; }
.intervals .num { width: 64px; }
.scope { height: 192px; }
.scope:last-child { height: 187px; }
.extras { position: absolute; left: 62%; right: 0; bottom: -1px; display: flex; align-items: center; padding-left: 6px; }
.extras > .ind { width: 54px; height: 26px; margin-left: 3px; }
.reclen { margin: -22px 2px -4px auto; width: 63px; }
.reclen > span { padding-left: 11px; display: block; height: 12px; }
.middle { position: relative; z-index: 2; display: flex; height: 209px; }
.marks { position: relative; z-index: 1; width: 4px; display: flex; flex-direction: column; justify-content: space-between; padding: 3px 0 1px; }
.marks span { width: 12px; }
.zone { width: 310px; flex: none; }
.cursor { width: 231px; height: 83px; padding: 7px 8px; border: 4px solid; border-color: #c4c4c4 #858585 #858585 #a8a8a8; background: #b0b0b0; }
.zone > .cursor { padding-left: 10px; padding-right: 6px; }
.ctop { display: flex; height: 45px; }
.ctop table { width: 188px; border-collapse: collapse; table-layout: fixed; background: #fff; }
.ctop th { height: 18px; padding: 0 4px; text-align: left; line-height: 16px; background: linear-gradient(90deg, #ccc, #bcbcbc 80%, #777); }
.ctop th:first-child { width: 99px; }
.ctop td { padding: 0 4px; height: 27px; vertical-align: top; border-left: 1px solid #ccc; overflow: hidden; }
.ctop .cn { border: 0; padding-left: 10px; }
.cn svg { vertical-align: middle; margin: -2px 2px 0 0; }
.cn b { display: inline-block; background: #ff0; font-weight: 400; padding: 0 2px; line-height: 17px; }
.dots { display: inline-block; width: 7px; border-top: 1px dotted #999; vertical-align: middle; margin-right: 1px; }
.vbar { flex: 1; display: flex; flex-direction: column; justify-content: space-between; background: #b5b5b5; }
.vbar button { height: 11px; line-height: 8px; padding: 0; }
.hbar { display: flex; width: 188px; height: 16px; }
.hbar button { width: 17px; padding: 0; line-height: 14px; }
.hbar i { flex: 1; background: linear-gradient(#ccc, #999); border: 1px solid #888; }
.zrow { display: flex; margin: 8px 0 0 12px; }
.abcd { width: 79px; height: 124px; flex: none; }
.abcd > div { height: 25px; padding: 0 14px; }
.over { position: absolute; left: 232px; top: -5px; z-index: 3; }
.zcol { margin: -8px 0 0 2px; }
.slot { display: flex; align-items: center; margin-left: -7px; gap: 4px; height: 25px; }
.slot .ind { width: 66px; height: 26px; }
.formula { margin: 7px 0 0 40px; }
.clock { width: 75px; flex: none; }
.padbox { background: linear-gradient(90deg, #c4c4c4, #b4b4b4 20%, #b4b4b4 75%, #999); border-bottom: 1px solid #777; text-align: center; height: 35px; }
.padbox svg { margin-top: 2px; }
.p1 { margin: 1px 0 3px 27px; padding-left: 8px; }
.p2 { margin: 0 3px 0 15px; }
.stamp { display: block; width: 73px; height: 41px; padding: 1px 1px; font-size: 10px; line-height: 16px; background: #d4d4d4; border: 3px solid; border-color: #bbb #f2f2f2 #f2f2f2 #bbb; }
.stop { display: block; width: 60px; height: 35px; margin: 4px 0 11px 6px; box-shadow: inset 2px 2px 0 #e0e0e0, inset -3px -3px 0 #909090; }
.pvq { display: block; margin-left: 15px; height: 17px; }
.clock .toggle { margin-left: 15px; height: 21px; }
.eight { flex: 1; height: 184px; position: relative; z-index: -1; }
.eight > div { height: 23px; padding: 0 14px 0 15px; }
.flat { background: #b3b3b3; border-right: 1px solid #666; border-left: 1px solid #ddd; border-bottom: 1px solid #777; height: 192px; }
.tall { height: 635px; }
.fill { display: flex; align-items: center; height: 28px; padding: 0 0 0 144px; gap: 4px; }
.ledbar { display: flex; width: 951px; height: 25px; padding: 2px 2px; border: 1px solid; border-color: #ccc #eee #eee #ccc; background: #b0b0b0; }
.vscroll { width: 17px; display: flex; flex-direction: column; align-items: center; padding: 5px 0; background: #f0f0f0; }
.vscroll i { flex: 1; width: 16px; margin: 203px 0 13px; background: #cdcdcd; }
.hscroll { display: flex; align-items: center; height: 17px; padding: 0 20px 0 4px; background: #f0f0f0; border-top: 1px solid #fff; }
.hscroll i { flex: 1; height: 16px; margin: 0 16px 0 13px; background: #cdcdcd; }
.mark { position: absolute; right: 10px; bottom: 8px; font: 16px/18px "Liberation Sans", sans-serif; color: rgba(255, 255, 255, 0.65); text-shadow: 1px 1px 1px rgba(120, 120, 120, 0.5); }
</style>

<style>
body { margin: 0; background: #e2e2e2; }
.window *, .window *::before { box-sizing: border-box; }
.window button { font: inherit; color: inherit; border: 0; background: none; }
.window .tabs button { background: linear-gradient(#d8d8d8, #b3b3b3 5px); border: solid; border-width: 0 2px; border-color: #d0d0d0 #777 #b3b3b3 #d0d0d0; }
.window .spin button { border: 1px solid #999; background: linear-gradient(90deg, #eee, #b0b0b0 80%); }
.window .actions button { border: 1px solid #000; background: #b3b3b3; }
.window .stop { border: 1px solid #444; color: #f00; background: linear-gradient(#d4d4d4, #b0b0b0); }
.window .check { border: 2px solid; border-color: #ddd #888 #888 #ddd; background: #ccc; }
.window .vbar button { border: 1px solid #777; font-size: 7px; line-height: 8px; color: #777; background: #c8c8c8; }
.window .hbar button { border: 1px solid; border-color: #ddd #777 #777 #ddd; font-size: 9px; line-height: 14px; background: #c4c4c4; }
.window svg { flex: none; }
.window .chart { display: block; width: 100%; height: auto; overflow: hidden; }
.window .chart text { font-size: 12px; }
.window .panel { position: relative; background: linear-gradient(90deg, #b4b4b4 0, #d0d0d0 3px, #cfcfcf 10px, #bebebe 16px, #bebebe calc(100% - 18px), #a0a0a0 calc(100% - 8px), #6c6c6c 100%); box-shadow: inset 0 1px 0 #d4d4d4, inset 0 -1px 0 #808080; }
.window input { font: inherit; min-width: 0; padding: 0 2px; color: #000; }
.window .num { display: flex; align-items: center; height: 27px; }
.window .num input, .window .ctl { flex: 1; width: 0; height: 27px; background: #fbfbfb; border: 3px solid; border-color: #8a8a8a #c8c8c8 #c8c8c8 #9c9c9c; }
.window .mean .ctl { width: 100%; }
.window .spin { display: flex; flex-direction: column; width: 12px; height: 27px; flex: none; }
.window .spin button { width: 12px; height: 13px; padding: 0; display: block; border-radius: 6px 6px 0 0; }
.window .spin .down { border-radius: 0 0 6px 6px; margin-top: 1px; border-bottom-color: #666; }
.window .spin svg { display: block; width: 10px; height: 11px; }
.window .ind { display: block; padding: 0 2px; line-height: 20px; background: #d3d3d3; border: solid; border-width: 3px 4px 4px; border-color: #8a8a8a #c2c2c2 #c2c2c2 #9c9c9c; }
.window .settings .ind, .window .slot .ind, .window .tabs .ind, .window .interp .num input, .window .resample .num input { border-color: #a8a8a8 #efefef #efefef #b4b4b4; }
.window .cluster { border: solid; border-width: 3px 4px 4px 3px; border-color: #8a8a8a #c2c2c2 #c2c2c2 #9a9a9a; background: #b3b3b3; }
.window .toggle { display: block; width: 52px; height: 22px; padding: 0; }
.window .toggle svg { display: block; }
.window .legend { background: linear-gradient(90deg, #c8c8c8, #cfcfcf 10px, #bebebe 16px, #bebebe calc(100% - 18px), #707070); border-bottom: 1px solid #777; border-top: 1px solid #ddd; }
.window .legend > div { display: flex; align-items: center; justify-content: space-between; }
.window .wave { display: block; }
.window .lamp { display: block; width: 21px; height: 21px; border-radius: 50%; background: radial-gradient(circle at 9px 10px, transparent 8px, #555 8px, #777 9px, transparent 10px), radial-gradient(circle at 7px 7px, #4b7030, #1c3c0b 5px, #143004 8px); clip-path: circle(9px at 10px 10px); }
.window .lamp.on { background: radial-gradient(circle at 9px 10px, transparent 8px, #777 8px, #eee 10px), radial-gradient(circle at 7px 6px, #b8ff98, #55f518 4px, #40dc08 9px); }
</style>
